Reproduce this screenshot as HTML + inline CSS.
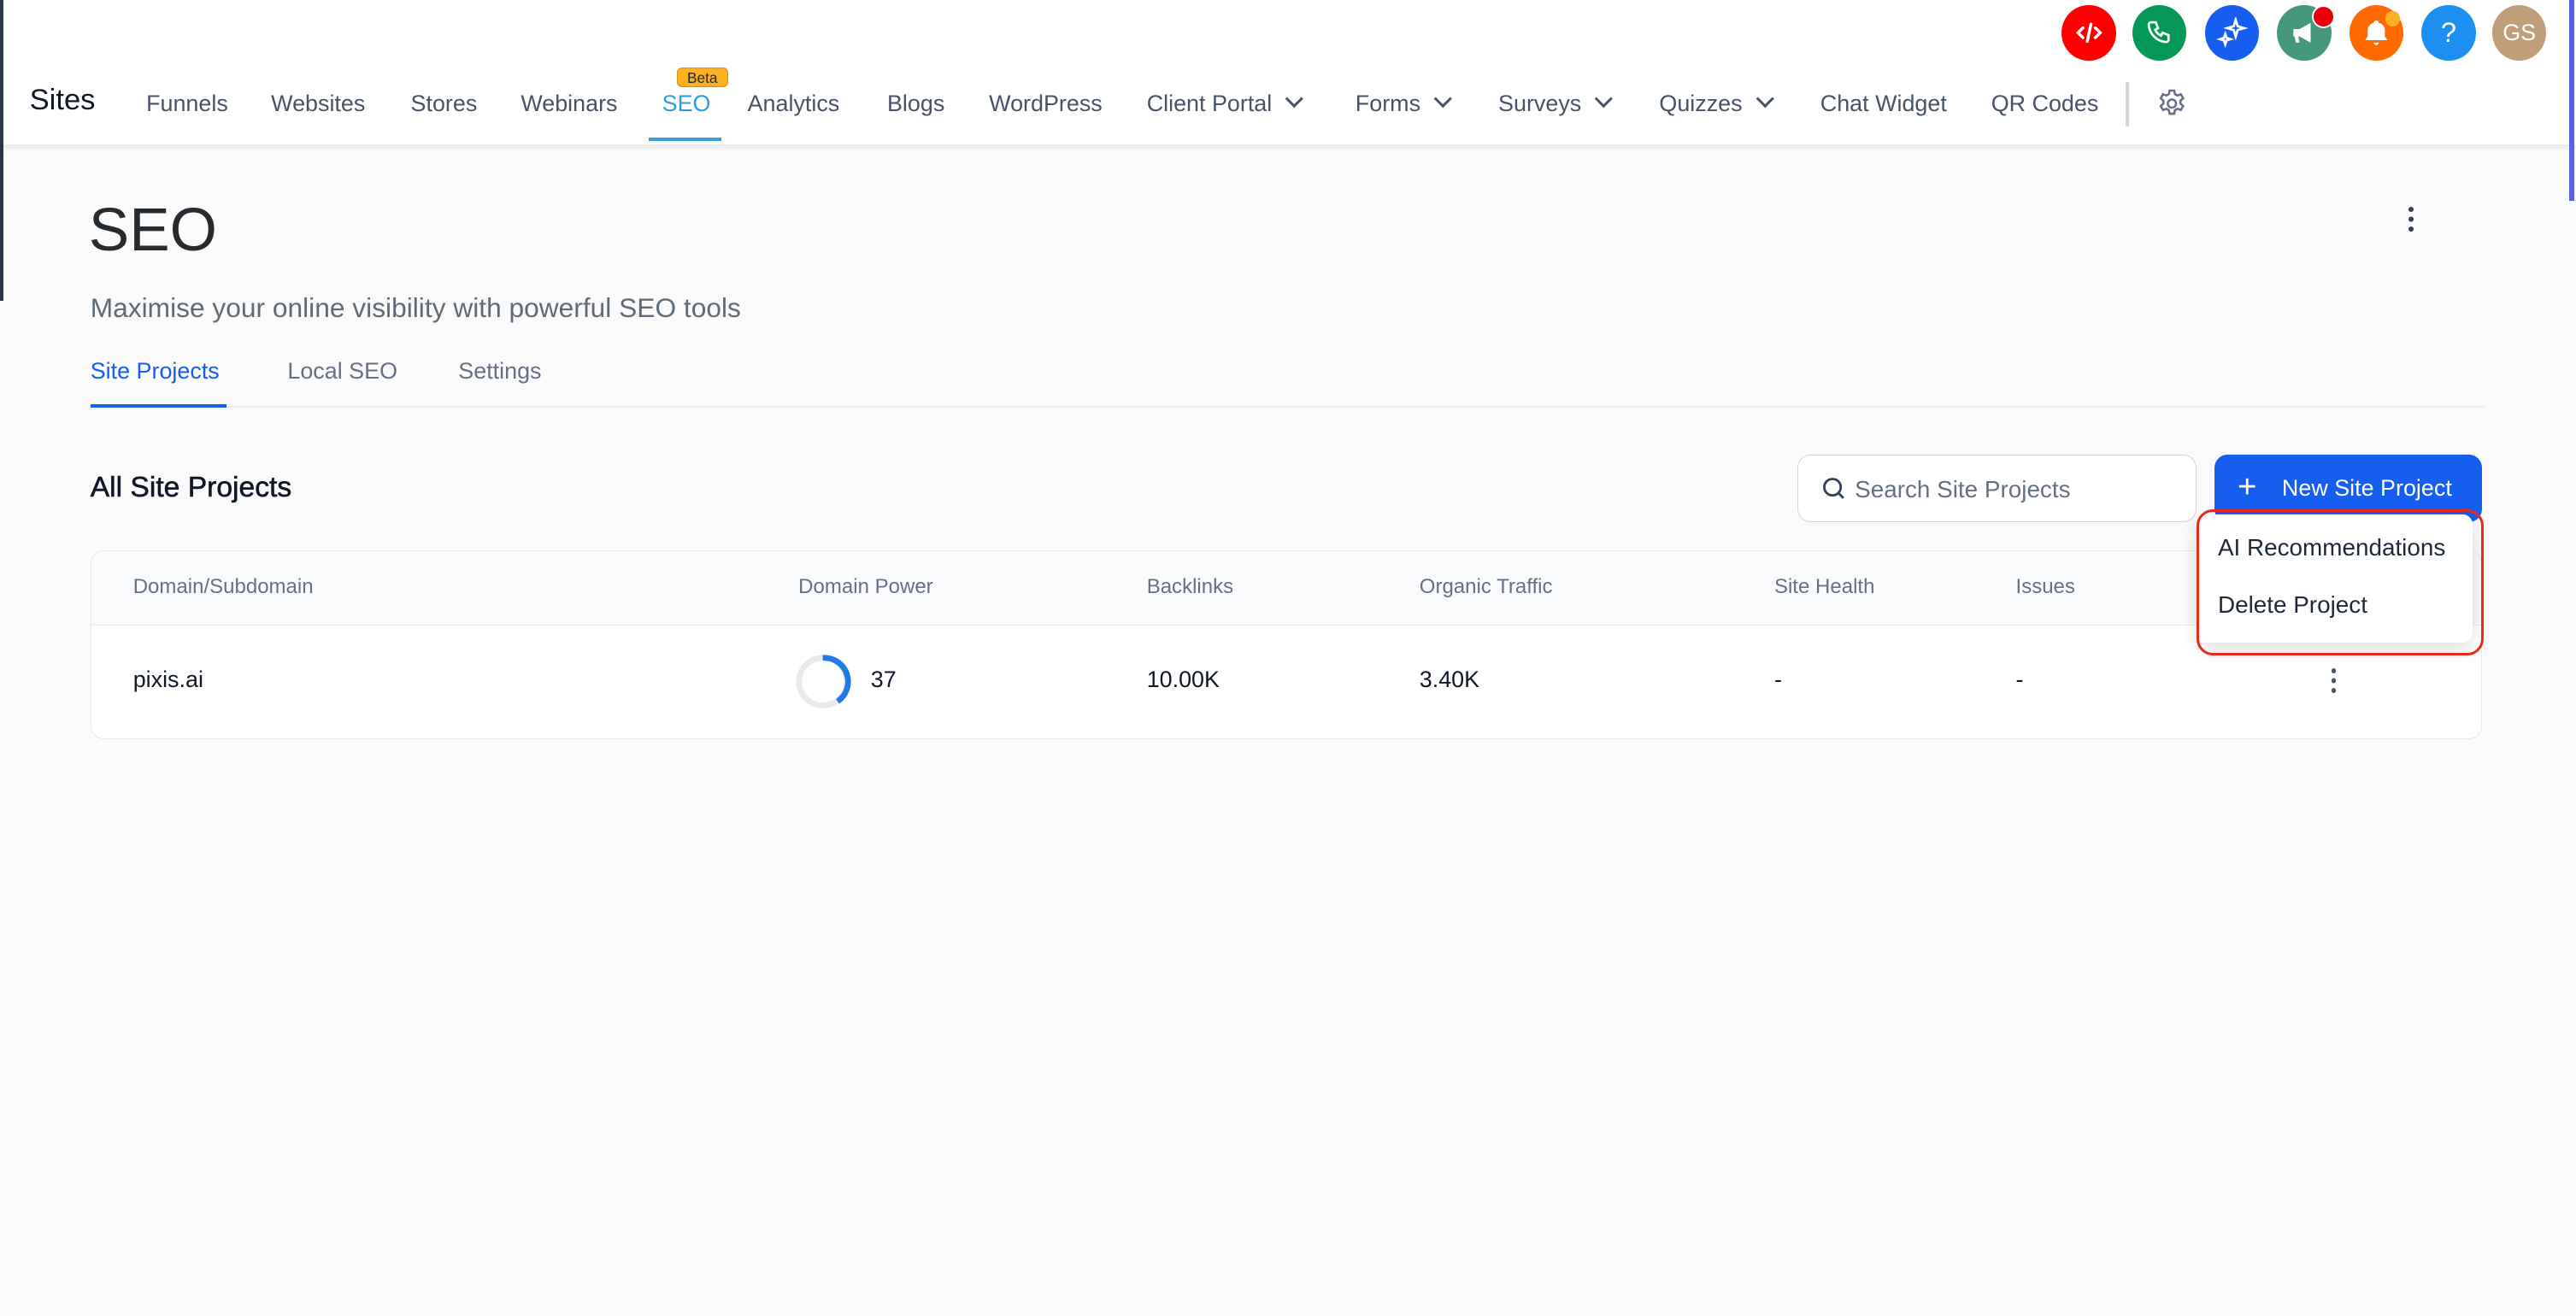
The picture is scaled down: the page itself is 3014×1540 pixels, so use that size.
<!DOCTYPE html>
<html><head><meta charset="utf-8"><style>
html,body{margin:0;padding:0}
body{width:1568px;height:801px;zoom:1.92219;background:#fafafa;font-family:"Liberation Sans",sans-serif;position:relative;overflow:hidden;color:#101828}
.a{position:absolute;white-space:nowrap}
.hdr{position:absolute;left:0;top:0;width:1568px;height:88px;background:#fff;box-shadow:0 2px 4px rgba(0,0,0,.08)}
.nav{font-size:14px;color:#475467;top:55px}
.ic{position:absolute;top:3px;width:33px;height:34px;border-radius:50%;display:flex;align-items:center;justify-content:center;color:#fff}
.chev{display:inline-block;width:6px;height:6px;border-right:1.6px solid #475467;border-bottom:1.6px solid #475467;transform:rotate(45deg);margin-left:10px;position:relative;top:-4px}
.th{font-size:12.5px;color:#667085;top:350px}
.td{font-size:14px;color:#101828;top:406px}
</style></head><body>
<div class="hdr"></div>
<div class="a" style="left:0;top:0;width:2px;height:183px;background:#2d3748;z-index:5"></div>
<div class="a" style="left:1564px;top:0;width:3px;height:122px;background:#5b5ff0"></div>
<div class="ic" style="left:1255px;background:#ff0000"><svg width="18" height="18" viewBox="0 0 24 24" fill="none" stroke="#fff" stroke-width="2.4" stroke-linecap="round"><path d="M7 8l-4 4 4 4M17 8l4 4-4 4M13.5 5l-3 14"/></svg></div>
<div class="ic" style="left:1298px;background:#039855"><svg width="17" height="17" viewBox="0 0 24 24" fill="none" stroke="#fff" stroke-width="2"><path d="M5 3h4l2 5-2.5 1.5a11 11 0 005 5L15 12l5 2v4a2 2 0 01-2 2A16 16 0 013 5a2 2 0 012-2z"/></svg></div>
<div class="ic" style="left:1342px;background:#155eef"><svg width="19" height="19" viewBox="0 0 24 24" fill="none" stroke="#fff" stroke-width="1.8"><path d="M15 2l1.5 5 5 1.5-5 1.5L15 15l-1.5-5-5-1.5 5-1.5z M7 13l1 3 3 1-3 1-1 3-1-3-3-1 3-1z"/></svg></div>
<div class="ic" style="left:1386px;background:#46987c"><svg width="18" height="18" viewBox="0 0 24 24" fill="#fff"><path d="M3 9h5l9-5v16l-9-5H7l1 5H5l-1-5H3z"/></svg></div>
<div class="a" style="left:1407px;top:3px;width:12px;height:12px;border-radius:50%;background:#e8000b;border:1.5px solid #fff"></div>
<div class="ic" style="left:1430px;background:#ff6a00"><svg width="18" height="18" viewBox="0 0 24 24" fill="#fff"><path d="M12 2a2 2 0 012 2 6 6 0 015 6v5l2 3H3l2-3v-5a6 6 0 015-6 2 2 0 012-2zM10 20h4a2 2 0 01-4 0z"/></svg></div>
<div class="a" style="left:1452px;top:7px;width:9px;height:9px;border-radius:50%;background:#fdb022"></div>
<div class="ic" style="left:1474px;background:#1d8ff2;font-size:17px">?</div>
<div class="ic" style="left:1517px;background:#bf9e78;font-size:14px">GS</div>

<div class="a" style="left:18px;top:51px;font-size:18px;color:#101828">Sites</div>
<div class="a nav" style="left:89px">Funnels</div>
<div class="a nav" style="left:165px">Websites</div>
<div class="a nav" style="left:250px">Stores</div>
<div class="a nav" style="left:317px">Webinars</div>
<div class="a nav" style="left:403px;color:#2d9cdb">SEO</div>
<div class="a" style="left:395px;top:84px;width:44px;height:2px;background:#3a9fd9"></div>
<div class="a" style="left:412px;top:41px;width:31px;height:12px;background:#fdb022;border:1px solid #d29a00;border-radius:3px;font-size:9px;line-height:12px;text-align:center;color:#1d2939;box-sizing:border-box">Beta</div>
<div class="a nav" style="left:455px">Analytics</div>
<div class="a nav" style="left:540px">Blogs</div>
<div class="a nav" style="left:602px">WordPress</div>
<div class="a nav" style="left:698px">Client Portal<span class="chev"></span></div>
<div class="a nav" style="left:825px">Forms<span class="chev"></span></div>
<div class="a nav" style="left:912px">Surveys<span class="chev"></span></div>
<div class="a nav" style="left:1010px">Quizzes<span class="chev"></span></div>
<div class="a nav" style="left:1108px">Chat Widget</div>
<div class="a nav" style="left:1212px">QR Codes</div>
<div class="a" style="left:1294px;top:50px;width:2px;height:27px;background:#d0d5dd"></div>
<svg class="a" style="left:1312px;top:53px" width="20" height="20" viewBox="0 0 24 24" fill="none" stroke="#667085" stroke-width="1.6"><circle cx="12" cy="12" r="3"/><path d="M10.3 2.5h3.4l.5 2.6 1.8 1 2.5-.9 1.7 2.9-2 1.8v2.1l2 1.8-1.7 2.9-2.5-.9-1.8 1-.5 2.6h-3.4l-.5-2.6-1.8-1-2.5.9-1.7-2.9 2-1.8v-2.1l-2-1.8 1.7-2.9 2.5.9 1.8-1z"/></svg>

<div class="a" style="left:54px;top:119px;font-size:37px;color:#262b30">SEO</div>
<div class="a" style="left:1466px;top:126px;width:3px;height:3px;border-radius:50%;background:#344054;box-shadow:0 6px 0 #344054,0 12px 0 #344054"></div>
<div class="a" style="left:55px;top:178px;font-size:16.5px;color:#5f6b77">Maximise your online visibility with powerful SEO tools</div>
<div class="a" style="left:55px;top:218px;font-size:14px;color:#155eef">Site Projects</div>
<div class="a" style="left:175px;top:218px;font-size:14px;color:#667085">Local SEO</div>
<div class="a" style="left:279px;top:218px;font-size:14px;color:#667085">Settings</div>
<div class="a" style="left:55px;top:247px;width:1457px;height:1px;background:#eaecf0"></div>
<div class="a" style="left:55px;top:246px;width:83px;height:2px;background:#155eef"></div>

<div class="a" style="left:55px;top:287px;font-size:17.5px;color:#101828;-webkit-text-stroke:0.3px #101828">All Site Projects</div>
<div class="a" style="left:1094px;top:277px;width:243px;height:41px;box-sizing:border-box;border:1px solid #d0d5dd;border-radius:8px;background:#fff"></div>
<svg class="a" style="left:1108px;top:289px" width="16" height="16" viewBox="0 0 24 24" fill="none" stroke="#344054" stroke-width="2.2"><circle cx="11" cy="11" r="7.5"/><path d="M17 17l4 4"/></svg>
<div class="a" style="left:1129px;top:290px;font-size:14.5px;color:#667085">Search Site Projects</div>
<div class="a" style="left:1348px;top:277px;width:163px;height:41px;background:#155eef;border-radius:8px"></div>
<div class="a" style="left:1362px;top:285px;font-size:20px;color:#fff;font-weight:300">+</div>
<div class="a" style="left:1389px;top:289px;font-size:14px;color:#fff">New Site Project</div>

<div class="a" style="left:55px;top:335px;width:1456px;height:115px;box-sizing:border-box;border:1px solid #e4e7ec;border-radius:8px;background:#fff;overflow:hidden">
<div style="height:45px;background:#f9fafb;border-bottom:1px solid #eaecf0"></div></div>
<div class="a th" style="left:81px">Domain/Subdomain</div>
<div class="a th" style="left:486px">Domain Power</div>
<div class="a th" style="left:698px">Backlinks</div>
<div class="a th" style="left:864px">Organic Traffic</div>
<div class="a th" style="left:1080px">Site Health</div>
<div class="a th" style="left:1227px">Issues</div>
<div class="a td" style="left:81px">pixis.ai</div>
<svg class="a" style="left:484px;top:398px" width="34" height="34" viewBox="0 0 34 34" fill="none" stroke-width="3.5"><circle cx="17" cy="17" r="14.5" stroke="#eaeaea"/><path d="M17 2.5A14.5 14.5 0 0126 29" stroke="#1f7ae8"/></svg>
<div class="a td" style="left:530px">37</div>
<div class="a td" style="left:698px">10.00K</div>
<div class="a td" style="left:864px">3.40K</div>
<div class="a td" style="left:1080px">-</div>
<div class="a td" style="left:1227px">-</div>
<div class="a" style="left:1419px;top:407px;width:3px;height:3px;border-radius:50%;background:#475467;box-shadow:0 6px 0 #475467,0 12px 0 #475467"></div>

<div class="a" style="left:1337px;top:313px;width:168px;height:78px;background:#fff;border-radius:6px;box-shadow:0 4px 12px rgba(0,0,0,.12)"></div>
<div class="a" style="left:1337px;top:310px;width:175px;height:89px;box-sizing:border-box;border:2px solid #ec2a1c;border-radius:10px"></div>
<div class="a" style="left:1350px;top:325px;font-size:14.5px;color:#1d2939">AI Recommendations</div>
<div class="a" style="left:1350px;top:360px;font-size:14.5px;color:#1d2939">Delete Project</div>
</body></html>
